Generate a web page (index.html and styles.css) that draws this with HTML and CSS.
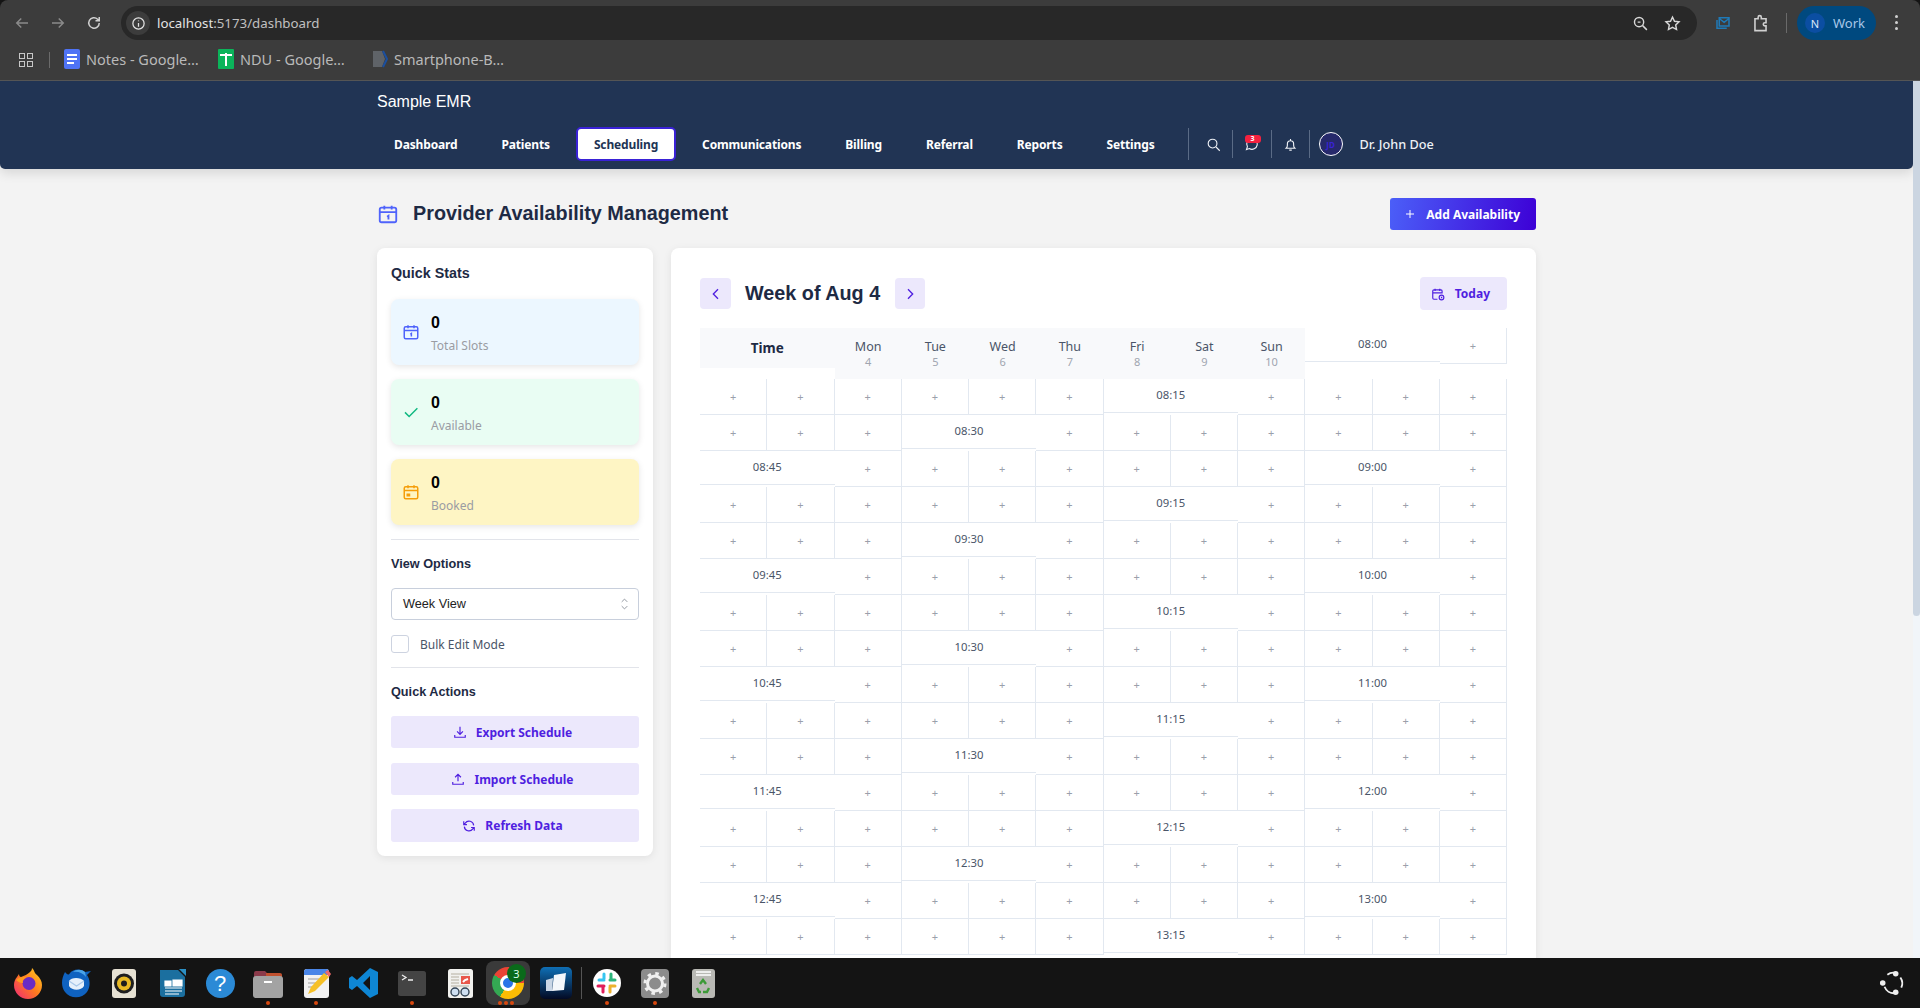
FILE: index.html
```html
<!DOCTYPE html>
<html lang="en">
<head>
    <meta charset="UTF-8">
    <meta name="viewport" content="width=device-width, initial-scale=1.0">
    <title>Sample EMR</title>
    <link rel="stylesheet" href="styles.css">
</head>
<body>
    <!-- Browser toolbar -->
    <div class="browser">
        <div class="toolbar">
            <svg class="tool-icon dim" viewBox="0 0 24 24"><path d="M20 12H5M11 6l-6 6 6 6"/></svg>
            <svg class="tool-icon dim" viewBox="0 0 24 24"><path d="M4 12h15M13 6l6 6-6 6"/></svg>
            <svg class="tool-icon" viewBox="0 0 24 24"><path d="M19 12a7 7 0 1 1-2.2-5.1L19 9M19 4v5h-5"/></svg>
            <div class="url-bar">
                <span class="url-info"><svg viewBox="0 0 24 24"><circle cx="12" cy="12" r="9"/><path d="M12 11v6M12 7v1.5"/></svg></span>
                <span class="url-text">localhost<span class="url-path">:5173/dashboard</span></span>
                <svg class="url-action zoom-lens" viewBox="0 0 24 24"><circle cx="10" cy="10" r="6.5"/><path d="M15 15l6 6M8 10h4"/></svg>
                <svg class="url-action star" viewBox="0 0 24 24"><path d="M12 3l2.8 5.9 6.4.8-4.7 4.4 1.2 6.4L12 17.4l-5.7 3.1 1.2-6.4-4.7-4.4 6.4-.8z"/></svg>
            </div>
            <svg class="ext-mail" viewBox="0 0 24 24"><path d="M7 5h13v11H7zM7 6l6.500 5L20 6M4 8v11h13"/></svg>
            <svg class="ext-puzzle" viewBox="0 0 24 24"><path d="M5 6h4V4a2 2 0 0 1 4 0v2h6v5h-1.500a2 2 0 0 0 0 4H19v6H5z"/></svg>
            <span class="tool-sep"></span>
            <div class="profile"><span class="profile-avatar">N</span><span>Work</span></div>
            <span class="kebab"><i></i><i></i><i></i></span>
        </div>
        <div class="bookmarks">
            <span class="apps-grid"><i></i><i></i><i></i><i></i></span>
            <span class="bookmark-sep"></span>
            <a class="bookmark"><svg viewBox="0 0 16 20"><rect width="16" height="20" rx="2" fill="#4f73f5"/><path d="M3 6h10M3 10h10M3 14h7" stroke="#fff" stroke-width="2"/></svg>Notes - Google…</a>
            <a class="bookmark"><svg viewBox="0 0 16 20"><rect width="16" height="20" rx="1" fill="#0bb45a"/><path d="M2 6h12M8 4v13" stroke="#fff" stroke-width="2"/></svg>NDU - Google…</a>
            <a class="bookmark"><svg viewBox="0 0 16 20"><path d="M1 2h9l3 8-3 8H1z" fill="#5f6368"/><path d="M11 2l4 8-4 8" fill="none" stroke="#1a4fa0" stroke-width="2"/></svg>Smartphone-B…</a>
        </div>
    </div>

    <div class="viewport">
        <div class="page">
            <header class="navbar">
                <div class="container">
                    <div class="brand">Sample EMR</div>
                    <nav class="nav">
                        <a class="nav-link">Dashboard</a>
                        <a class="nav-link">Patients</a>
                        <a class="nav-link active">Scheduling</a>
                        <a class="nav-link">Communications</a>
                        <a class="nav-link">Billing</a>
                        <a class="nav-link">Referral</a>
                        <a class="nav-link">Reports</a>
                        <a class="nav-link">Settings</a>
                        <div class="nav-tools">
                            <span class="nav-tool tool-search"><svg viewBox="0 0 24 24"><circle cx="10.500" cy="10.500" r="7"/><path d="M16 16l6 6"/></svg></span>
                            <span class="nav-tool tool-chat"><svg viewBox="0 0 24 24"><path d="M4 20l1.500-4.500a8.500 8.500 0 1 1 3 3z"/></svg><b class="badge">3</b></span>
                            <span class="nav-tool tool-bell"><svg viewBox="0 0 24 24"><path d="M5 18c1.500-1.500 2-3 2-5v-2a5 5 0 0 1 10 0v2c0 2 .5 3.500 2 5zM10 21h4M12 3v3"/></svg></span>
                            <span class="avatar">JD</span>
                            <span class="user-name">Dr. John Doe</span>
                        </div>
                    </nav>
                </div>
            </header>

            <main class="container content">
                <div class="page-head">
                    <svg class="head-icon" viewBox="0 0 24 24"><rect x="3" y="5" width="18" height="16" rx="2"/><path d="M3 10h18M8 3v4M16 3v4M11 15l1.500-1v4"/></svg>
                    <h1>Provider Availability Management</h1>
                    <button class="btn-primary"><svg viewBox="0 0 24 24"><path d="M12 4v16M4 12h16"/></svg>Add Availability</button>
                </div>

                <div class="columns">
                    <aside class="card sidebar">
                        <h3 class="side-title">Quick Stats</h3>
                        <div class="stat stat-blue">
                            <svg viewBox="0 0 24 24"><rect x="3" y="5" width="18" height="16" rx="2"/><path d="M3 10h18M8 3v4M16 3v4M11 15l1.500-1v4"/></svg>
                            <div class="stat-text"><strong>0</strong><span>Total Slots</span></div>
                        </div>
                        <div class="stat stat-green">
                            <svg viewBox="0 0 24 24"><path d="M4 12.500l5.500 5.500L20.500 7"/></svg>
                            <div class="stat-text"><strong>0</strong><span>Available</span></div>
                        </div>
                        <div class="stat stat-yellow">
                            <svg viewBox="0 0 24 24"><rect x="3" y="5" width="18" height="16" rx="2"/><path d="M3 10h18M8 3v4M16 3v4M7 15h3v2H7z"/></svg>
                            <div class="stat-text"><strong>0</strong><span>Booked</span></div>
                        </div>

                        <hr class="divider">
                        <h3 class="side-title tight">View Options</h3>
                        <div class="select">
                            <span>Week View</span>
                            <svg viewBox="0 0 12 20"><path d="M2 7l4-4 4 4M2 13l4 4 4-4"/></svg>
                        </div>
                        <label class="check-row"><span class="checkbox"></span>Bulk Edit Mode</label>

                        <hr class="divider">
                        <h3 class="side-title tight">Quick Actions</h3>
                        <button class="btn-soft"><svg viewBox="0 0 24 24"><path d="M12 3v12M7 11l5 5 5-5M3 17v4h18v-4"/></svg>Export Schedule</button>
                        <button class="btn-soft"><svg viewBox="0 0 24 24"><path d="M12 16V4M7 9l5-5 5 5M3 17v4h18v-4"/></svg>Import Schedule</button>
                        <button class="btn-soft last"><svg viewBox="0 0 24 24"><path d="M20 11a8 8 0 0 0-14.500-4L3 9.500M3 4v5.500h5.500M4 13a8 8 0 0 0 14.500 4l2.500-2.500M21 20v-5.500h-5.500"/></svg>Refresh Data</button>
                    </aside>

                    <section class="card calendar">
                        <div class="calendar-head">
                            <button class="btn-arrow"><svg viewBox="0 0 24 24"><path d="M15 5l-7 7 7 7"/></svg></button>
                            <h2>Week of Aug 4</h2>
                            <button class="btn-arrow next"><svg viewBox="0 0 24 24"><path d="M9 5l7 7-7 7"/></svg></button>
                            <button class="btn-today"><svg viewBox="0 0 24 24"><path d="M11 21H5a2 2 0 0 1-2-2V7a2 2 0 0 1 2-2h12a2 2 0 0 1 2 2v4M3 10h16M7 3v4M15 3v4"/><circle cx="18" cy="18" r="4"/><path d="M18 16.500V18l1 1"/></svg>Today</button>
                        </div>
                        <div class="schedule" id="schedule">
                            <div class="time-head">Time</div>
                            <div class="day-head">Mon<small>4</small></div>
                            <div class="day-head">Tue<small>5</small></div>
                            <div class="day-head">Wed<small>6</small></div>
                            <div class="day-head">Thu<small>7</small></div>
                            <div class="day-head">Fri<small>8</small></div>
                            <div class="day-head">Sat<small>9</small></div>
                            <div class="day-head">Sun<small>10</small></div>
                        </div>
                    </section>
                </div>
            </main>
        </div>
        <div class="scrollbar"><div class="scrollbar-thumb"></div></div>
    </div>

    <!-- Desktop dock -->
    <footer class="dock">
        <span class="dock-item"><svg viewBox="0 0 32 32"><defs><linearGradient id="fx" x1="1" y1="0" x2="0" y2="1"><stop offset="0" stop-color="#ffd21f"/><stop offset=".5" stop-color="#ff7a1f"/><stop offset="1" stop-color="#f0247c"/></linearGradient></defs><path d="M20 1c3 3 2 5 5 7 3 3 5 6 5 10a14 14 0 0 1-28 0c0-3 1-6 3-8l2-3c0 2 1 3 2 3 3-1 7-3 9-5 1-1 2-2 2-4z" fill="url(#fx)"/><circle cx="17" cy="16.500" r="6.500" fill="#6a2bc4"/><path d="M4 13c3-3 8-4 11-2-3 0-5 2-4 5-3 0-5-1-7-3z" fill="#ff9a1f"/></svg></span>
        <span class="dock-item"><svg viewBox="0 0 32 32"><path d="M5 5C1 12 1 20 5 25c5 7 17 7 22 0 4-6 3-13 0-17l4-4-6 1C20 1 13 2 10 6 8 9 7 7 5 5z" fill="#0f62c0"/><path d="M25 5c-3-3-9-3-12 0 5-1 10 1 13 5z" fill="#4aa3e8"/><path d="M9 14c2-4 12-4 15 0v5c-3 5-12 5-15 0z" fill="#e6f0fb"/><path d="M9 14l7.500 5 7.500-5" fill="none" stroke="#a9c8ea" stroke-width="1.200"/></svg></span>
        <span class="dock-item"><svg viewBox="0 0 32 32"><rect x="4" y="2" width="24" height="29" rx="3" fill="#e6e1d3"/><circle cx="16" cy="16.500" r="10" fill="#1e1e1e"/><circle cx="16" cy="16.500" r="7" fill="#e8b923"/><circle cx="16" cy="16.500" r="3" fill="#1e1e1e"/></svg></span>
        <span class="dock-item"><svg viewBox="0 0 32 32"><path d="M4 3h18l7 7v17a3 3 0 0 1-3 3H7a3 3 0 0 1-3-3z" fill="#1b6f9f"/><path d="M23 2l7 0v7z" fill="#2b8fc4"/><path d="M9 14h6v5H9zM17 13h9v6h-9zM9 21h17M9 24h17M9 27h14" fill="#fff" stroke="#fff" stroke-width="1.200"/></svg></span>
        <span class="dock-item"><span class="help-ball">?</span></span>
        <span class="dock-item running"><svg viewBox="0 0 32 32"><path d="M2 6a2 2 0 0 1 2-2h9l3 3h12a2 2 0 0 1 2 2v4H2z" fill="#8a3a4a"/><path d="M14 6h14a2 2 0 0 1 2 2v4H14z" fill="#c0512f"/><rect x="1" y="9" width="30" height="22" rx="3" fill="#a3a3a3"/><path d="M12 15h8" stroke="#fff" stroke-width="2"/></svg></span>
        <span class="dock-item running"><svg viewBox="0 0 32 32"><rect x="4" y="2" width="25" height="29" rx="3" fill="#f2f2f2"/><path d="M4 5a3 3 0 0 1 3-3h19a3 3 0 0 1 3 3v3H4z" fill="#4a86e8"/><path d="M8 12h14M8 16h12M8 20h8" stroke="#bbb" stroke-width="1.300"/><path d="M8 27l3-7 13-14 5 4-14 14z" fill="#f6c026"/><path d="M25 5l3-2 3 4-2 3z" fill="#ef6a6a"/></svg></span>
        <span class="dock-item"><svg viewBox="0 0 32 32"><path d="M22 1l8 4v22l-8 4L9 19l-5 4-3-2v-10l3-2 5 4zM22 9l-7 7 7 7z" fill="#0e86d4"/></svg></span>
        <span class="dock-item running"><svg viewBox="0 0 32 32"><rect x="2" y="4" width="28" height="25" rx="2.500" fill="#444"/><path d="M6 8l4 2.500L6 13M12 13h5" fill="none" stroke="#eee" stroke-width="1.300"/></svg></span>
        <span class="dock-item"><svg viewBox="0 0 32 32"><rect x="4" y="2" width="25" height="29" rx="2.500" fill="#f1f1ee"/><path d="M7 7h18M7 10h8M7 13h8M7 16h8M7 19h18" stroke="#b5b0a0" stroke-width="1.200"/><rect x="17" y="9" width="9" height="8" fill="#e8574a"/><path d="M19 15l2-2 3-1" stroke="#fff" fill="none"/><circle cx="11" cy="25" r="4" fill="#cfe0f2" stroke="#345" stroke-width="1.400"/><circle cx="21" cy="25" r="4" fill="#cfe0f2" stroke="#345" stroke-width="1.400"/></svg></span>
        <span class="dock-item active-app">
            <span class="chrome-logo"><span></span></span>
            <b class="dock-count">3</b>
            <span class="app-dots"><i></i><i></i><i></i></span>
        </span>
        <span class="dock-item"><svg viewBox="0 0 32 32"><defs><linearGradient id="vb" x1="0" y1="0" x2="0" y2="1"><stop offset="0" stop-color="#0f6fb5"/><stop offset="1" stop-color="#030a24"/></linearGradient></defs><rect width="32" height="32" rx="5" fill="url(#vb)"/><path d="M14 8l12-2-2 17-12 1z" fill="#f4f7fb"/><path d="M6 13l7-2-1 13H6z" fill="#c9d6e6"/></svg></span>
        <span class="dock-sep"></span>
        <span class="dock-item running"><svg viewBox="0 0 32 32"><circle cx="16" cy="16" r="14" fill="#fff"/><path d="M13 7v5M8 13h5" stroke="#36c5f0" stroke-width="3" stroke-linecap="round"/><path d="M20 7v6M19 13h5" stroke="#2eb67d" stroke-width="3" stroke-linecap="round"/><path d="M19 25v-5M24 19h-5" stroke="#ecb22e" stroke-width="3" stroke-linecap="round"/><path d="M12 25v-6M7 19h6" stroke="#e01e5a" stroke-width="3" stroke-linecap="round"/></svg></span>
        <span class="dock-item running"><svg viewBox="0 0 32 32"><rect x="2" y="2" width="28" height="29" rx="4" fill="#8c8c8c"/><circle cx="16" cy="16.500" r="7.500" fill="none" stroke="#f0f0f0" stroke-width="3"/><circle cx="16" cy="16.500" r="10" fill="none" stroke="#f0f0f0" stroke-width="3" stroke-dasharray="3.500 4.350"/></svg></span>
        <span class="dock-item"><svg viewBox="0 0 32 32"><rect x="5" y="2" width="23" height="29" rx="3" fill="#b9b9b4"/><path d="M9 5h15M9 8h15" stroke="#fff" stroke-width="1.600"/><path d="M13 17l3-4 3 4M22 21l-2 4h-4M10 21l2 4h2" fill="none" stroke="#3c9a37" stroke-width="2.400"/></svg></span>
        <span class="dock-logo"><svg viewBox="0 0 28 28"><path d="M9 5a11 11 0 0 1 8-2M23 8a11 11 0 0 1 1 11M6 18a11 11 0 0 0 11 7" fill="none" stroke="#eee" stroke-width="2"/><circle cx="18" cy="4" r="3" fill="#eee"/><circle cx="4" cy="14" r="3" fill="#eee"/><circle cx="18" cy="24" r="3" fill="#eee"/></svg></span>
    </footer>
    <script src="script.js"></script>
</body>
</html>
```

FILE: styles.css
```css
* {
    box-sizing: border-box;
}
body {
    font-family: "Noto Sans", Arial, sans-serif;
    background-color: #141414;
    margin: 0;
    height: 100vh;
    display: flex;
    flex-direction: column;
    overflow: hidden;
}
svg {
    fill: none;
    stroke: currentColor;
    stroke-width: 2;
    flex-shrink: 0;
}

/* browser */
.browser {
    height: 81px;
    background-color: #3c3c3c;
    border-bottom: 1px solid #555;
    border-radius: 8px 8px 0 0;
    color: #c7c7c7;
    flex-shrink: 0;
}
.toolbar {
    height: 40px;
    padding: 6px 0 0 13px;
    display: flex;
    align-items: flex-start;
}
.tool-icon {
    width: 18px;
    height: 18px;
    margin: 8px 18px 0 0;
    color: #d0d0d0;
}
.tool-icon.dim {
    color: #8a8a8a;
}
.url-bar {
    width: 1576px;
    height: 34px;
    background-color: #282828;
    border-radius: 17px;
    display: flex;
    align-items: center;
    padding: 0 16px 0 5px;
}
.url-info {
    width: 24px;
    height: 24px;
    border-radius: 50%;
    background-color: #3c3c3c;
    display: flex;
    align-items: center;
    justify-content: center;
}
.url-info svg {
    width: 15px;
    height: 15px;
    color: #e3e3e3;
}
.url-text {
    font-size: 13.300px;
    color: #e3e3e3;
    margin-left: 7px;
}
.url-path {
    color: #c0c0c0;
}
.url-action {
    width: 17px;
    height: 17px;
    color: #d8d8d8;
}
.zoom-lens {
    margin-left: auto;
}
.star {
    margin-left: 15px;
}
.ext-mail {
    width: 18px;
    height: 18px;
    margin: 8px 0 0 17px;
    color: #1f7ab8;
}
.ext-puzzle {
    width: 19px;
    height: 19px;
    margin: 8px 0 0 19px;
    color: #d0d0d0;
}
.tool-sep {
    width: 1px;
    height: 20px;
    margin: 7px 10px 0 16px;
    background-color: #6a6a6a;
}
.profile {
    width: 79px;
    height: 34px;
    background-color: #00497f;
    border-radius: 17px;
    display: flex;
    align-items: center;
    gap: 8px;
    padding-left: 8px;
    font-size: 13px;
    color: #a8c7e8;
}
.profile-avatar {
    width: 20px;
    height: 20px;
    border-radius: 50%;
    background-color: #0b4ea2;
    color: #dbe8f8;
    font-size: 11px;
    display: flex;
    align-items: center;
    justify-content: center;
}
.kebab {
    margin: 9px 0 0 19px;
    display: flex;
    flex-direction: column;
    gap: 3px;
}
.kebab i {
    width: 3px;
    height: 3px;
    border-radius: 50%;
    background-color: #d0d0d0;
}
.bookmarks {
    height: 40px;
    display: flex;
    align-items: center;
    padding-left: 19px;
}
.apps-grid {
    width: 14px;
    height: 14px;
    display: grid;
    grid-template-columns: 6px 6px;
    gap: 2px;
}
.apps-grid i {
    border: 1.500px solid #c7c7c7;
}
.bookmark-sep {
    width: 1px;
    height: 16px;
    background-color: #6a6a6a;
    margin: 0 14px 0 16px;
}
.bookmark {
    display: flex;
    align-items: center;
    gap: 6px;
    width: 154px;
    font-size: 14.500px;
    line-height: 16px;
    padding-bottom: 2px;
    color: #b9b9b9;
}
.bookmark svg {
    width: 16px;
    height: 20px;
    stroke: none;
}

/* page */
.viewport {
    flex: 1;
    min-height: 0;
    display: flex;
    background-color: #f3f3f3;
}
.page {
    flex: 1;
    min-width: 0;
    overflow: hidden;
}
.scrollbar {
    width: 7px;
    background-color: #f1f5f9;
}
.scrollbar-thumb {
    height: 535px;
    background-color: #cbd5e1;
    border-radius: 0 0 4px 4px;
}
.container {
    width: 1159px;
    margin: 0 auto;
}
.navbar {
    height: 88px;
    background-color: #213454;
    border-radius: 0 0 5px 5px;
    box-shadow: 0 4px 12px rgba(0, 0, 0, 0.12);
    color: #fff;
}
.brand {
    font-family: "Liberation Sans", Arial, sans-serif;
    font-size: 16px;
    line-height: 18px;
    padding-top: 12px;
    height: 46px;
}
.nav {
    display: flex;
    align-items: center;
    gap: 8px;
    margin-left: -1px;
}
.nav-link {
    height: 34px;
    padding: 0 16px;
    border: 2px solid transparent;
    border-radius: 5px;
    font-size: 12px;
    font-weight: 700;
    letter-spacing: -0.15px;
    line-height: 31px;
    white-space: nowrap;
}
.nav-link.active {
    background-color: #fff;
    border-color: #3a22d6;
    color: #213454;
}
.nav-tools {
    display: flex;
    align-items: center;
    height: 32px;
    margin-left: 7px;
    border-left: 1px solid #5a6b86;
}
.nav-tool {
    height: 28px;
    border-right: 1px solid #5a6b86;
    display: flex;
    align-items: center;
    position: relative;
}
.nav-tool svg {
    width: 15px;
    height: 15px;
    stroke-width: 1.800;
    color: #eef1f6;
}
.tool-search {
    padding: 0 11px 0 17px;
}
.tool-chat {
    padding: 0 12px 0 11px;
}
.tool-bell {
    padding: 0 11px 0 11px;
}
.badge {
    position: absolute;
    top: 5px;
    left: 12px;
    width: 16px;
    height: 8px;
    background-color: #f5213f;
    border-radius: 3px;
    font-size: 7px;
    line-height: 8px;
    text-align: center;
}
.avatar {
    width: 24px;
    height: 24px;
    margin-left: 9px;
    border: 1px solid #fff;
    border-radius: 50%;
    background-color: #26296b;
    color: #3a22d6;
    font-size: 8px;
    font-weight: 700;
    display: flex;
    align-items: center;
    justify-content: center;
}
.user-name {
    margin-left: 17px;
    font-size: 12.700px;
    font-weight: 500;
    color: #eef1f6;
}

.content {
    padding-top: 29px;
}
.page-head {
    display: flex;
    align-items: center;
    height: 32px;
    margin-bottom: 18px;
}
.head-icon {
    width: 22px;
    height: 22px;
    color: #4f63fb;
    margin-right: 14px;
}
h1 {
    font-family: "Liberation Sans", Arial, sans-serif;
    font-size: 19.800px;
    font-weight: 700;
    color: #1e2a44;
    margin: -2px 0 0;
}
.btn-primary {
    margin-left: auto;
    height: 32px;
    padding: 0 16px 0 14px;
    border: none;
    border-radius: 3px;
    background: linear-gradient(100deg, #4b5ff8, #3d00d6);
    color: #fff;
    font-family: inherit;
    font-size: 12px;
    font-weight: 700;
    display: flex;
    align-items: center;
    gap: 10px;
}
.btn-primary svg {
    width: 12px;
    height: 12px;
}
.columns {
    display: flex;
    align-items: flex-start;
    gap: 18px;
}
.card {
    background-color: #fff;
    border-radius: 8px;
    box-shadow: 0 2px 8px rgba(0, 0, 0, 0.08);
}

/* sidebar */
.sidebar {
    width: 276px;
    padding: 14px;
    flex-shrink: 0;
}
.side-title {
    font-family: "Liberation Sans", Arial, sans-serif;
    font-size: 14.300px;
    font-weight: 700;
    line-height: 22px;
    color: #1e2a44;
    margin: 0 0 15px;
}
.side-title.tight {
    font-size: 12.700px;
    margin: 13px 0 13px;
}
.stat {
    height: 66px;
    border-radius: 8px;
    margin-bottom: 14px;
    padding-left: 11px;
    display: flex;
    align-items: center;
    gap: 11px;
    box-shadow: 0 2px 6px rgba(0, 0, 0, 0.1);
}
.stat svg {
    width: 18px;
    height: 18px;
}
.stat-blue {
    background-color: #ecf7ff;
    color: #4f63fb;
}
.stat-green {
    background-color: #e9fdf3;
    color: #10b981;
}
.stat-yellow {
    background-color: #fef5c4;
    color: #f59e0b;
    margin-bottom: 0;
}
.stat-text {
    padding-top: 4px;
}
.stat-text strong {
    display: block;
    font-family: "Liberation Sans", Arial, sans-serif;
    font-size: 16px;
    line-height: 20px;
    color: #000;
}
.stat-text span {
    display: block;
    margin-top: 4px;
    font-size: 12px;
    line-height: 18px;
    color: #9a9ca3;
}
.divider {
    border: none;
    border-top: 1px solid #e2e4ea;
    margin: 14px 0 0;
}
.select {
    height: 32px;
    border: 1px solid #c8cfdc;
    border-radius: 4px;
    padding: 0 9px 0 11px;
    display: flex;
    align-items: center;
    justify-content: space-between;
    font-family: "Liberation Sans", Arial, sans-serif;
    font-size: 12.700px;
    color: #222;
}
.select svg {
    width: 9px;
    height: 14px;
    color: #8a8f99;
    stroke-width: 1.300;
}
.check-row {
    display: flex;
    align-items: center;
    gap: 11px;
    margin-top: 15px;
    font-size: 12px;
    color: #4a5568;
}
.checkbox {
    width: 18px;
    height: 18px;
    border: 1px solid #cdd3e0;
    border-radius: 3px;
}
.btn-soft {
    width: 100%;
    height: 32px;
    margin-bottom: 15px;
    padding: 0 5px 0 0;
    border: none;
    border-radius: 3px;
    background-color: #ece8fc;
    color: #4f1fe0;
    font-family: inherit;
    font-size: 12px;
    font-weight: 700;
    display: flex;
    align-items: center;
    justify-content: center;
    gap: 9px;
}
.btn-soft svg {
    width: 14px;
    height: 14px;
}
.btn-soft.last {
    height: 33px;
    margin-bottom: 0;
    margin-top: -1px;
}

/* calendar */
.calendar {
    width: 865px;
    padding: 29px 29px 10px;
}
.calendar-head {
    display: flex;
    align-items: center;
    height: 33px;
    margin-bottom: 18px;
}
.calendar-head h2 {
    font-family: "Liberation Sans", Arial, sans-serif;
    font-size: 19.800px;
    font-weight: 700;
    color: #1e2a44;
    margin: 0 15px 0 14px;
}
.btn-arrow {
    width: 31px;
    height: 31px;
    padding: 0;
    border: none;
    border-radius: 4px;
    background-color: #ece8fc;
    color: #4f1fe0;
    display: flex;
    align-items: center;
    justify-content: center;
}
.btn-arrow.next {
    width: 30px;
}
.btn-arrow svg {
    width: 16px;
    height: 16px;
}
.btn-today {
    margin-left: auto;
    height: 33px;
    padding: 0 17px 0 11px;
    border: none;
    border-radius: 4px;
    background-color: #ece8fc;
    color: #4f1fe0;
    font-family: inherit;
    font-size: 12px;
    font-weight: 700;
    display: flex;
    align-items: center;
    gap: 10px;
}
.btn-today svg {
    width: 14px;
    height: 14px;
}
.schedule {
    display: grid;
    grid-template-columns: repeat(12, 1fr);
    align-items: start;
    width: 807px;
}
.time-head {
    grid-column: span 2;
    height: 40px;
    background-color: #f8f9fb;
    font-size: 13.500px;
    font-weight: 700;
    color: #1e2a44;
    line-height: 40px;
    text-align: center;
}
.day-head {
    height: 51px;
    padding-top: 10px;
    background-color: #f8f9fb;
    font-size: 12.500px;
    line-height: 17px;
    color: #4a5568;
    text-align: center;
}
.day-head small {
    display: block;
    font-size: 11px;
    line-height: 13px;
    color: #a0a5b0;
}
.time-cell {
    grid-column: span 2;
    height: 34px;
    border-bottom: 1px solid #e2e8f0;
    background-color: #fff;
    font-size: 11.300px;
    line-height: 32px;
    color: #4a5568;
    text-align: center;
}
.slot {
    height: 36px;
    border-right: 1px solid #e2e8f0;
    border-bottom: 1px solid #e2e8f0;
    font-size: 11px;
    line-height: 36px;
    color: #9aa0ab;
    text-align: center;
}

/* dock */
.dock {
    height: 50px;
    flex-shrink: 0;
    background-color: #141414;
    display: flex;
    align-items: center;
    padding-left: 4px;
}
.dock-item {
    width: 48px;
    height: 50px;
    display: flex;
    align-items: center;
    justify-content: center;
    position: relative;
}
.dock-item svg {
    width: 32px;
    height: 32px;
    stroke: none;
}
.dock-item.running::after {
    content: "";
    position: absolute;
    bottom: 3px;
    left: 22px;
    width: 4px;
    height: 4px;
    border-radius: 50%;
    background-color: #d9480f;
}
.help-ball {
    width: 29px;
    height: 29px;
    border-radius: 50%;
    background-color: #2b8ad6;
    color: #fff;
    font-family: "Liberation Sans", Arial, sans-serif;
    font-size: 22px;
    line-height: 29px;
    text-align: center;
}
.active-app::before {
    content: "";
    position: absolute;
    top: 3px;
    left: 2px;
    width: 44px;
    height: 44px;
    border-radius: 8px;
    background-color: #3a3a3a;
}
.chrome-logo {
    position: relative;
    width: 32px;
    height: 32px;
    border-radius: 50%;
    background: conic-gradient(from -60deg, #ea4335 0 150deg, #fbbc04 150deg 270deg, #34a853 270deg 360deg);
    display: flex;
    align-items: center;
    justify-content: center;
}
.chrome-logo span {
    width: 16px;
    height: 16px;
    border: 3px solid #fff;
    border-radius: 50%;
    background-color: #2a74e8;
}
.dock-count {
    position: absolute;
    top: 6px;
    left: 23px;
    width: 19px;
    height: 19px;
    border-radius: 50%;
    background-color: #0a6a1a;
    color: #dfe;
    font-size: 11px;
    font-weight: 400;
    line-height: 19px;
    text-align: center;
}
.app-dots {
    position: absolute;
    bottom: 3px;
    left: 14px;
    display: flex;
    gap: 2px;
}
.app-dots i {
    width: 4px;
    height: 4px;
    border-radius: 50%;
    background-color: #d9480f;
}
.dock-sep {
    width: 1px;
    height: 32px;
    margin: 0 1px;
    background-color: #555;
}
.dock-logo {
    margin-left: auto;
    margin-right: 15px;
    display: flex;
}
.dock-logo svg {
    width: 26px;
    height: 26px;
    stroke: none;
}
```

FILE: script.js
```js
// Rellenar la cuadricula hasta la ultima fila visible
const schedule = document.getElementById('schedule');
const totalColumns = 12 * 17;

let used = 9; // la cabecera ocupa 9 columnas
let mins = 8 * 60;
let html = '';
while (used < totalColumns) {
    const hour = String(Math.floor(mins / 60)).padStart(2, '0');
    const minute = String(mins % 60).padStart(2, '0');
    html += `<div class="time-cell">${hour}:${minute}</div>`;
    used += 2;
    for (let i = 0; i < 7 && used < totalColumns; i++) {
        html += '<div class="slot">+</div>';
        used++;
    }
    mins += 15;
}
schedule.insertAdjacentHTML('beforeend', html);
```
